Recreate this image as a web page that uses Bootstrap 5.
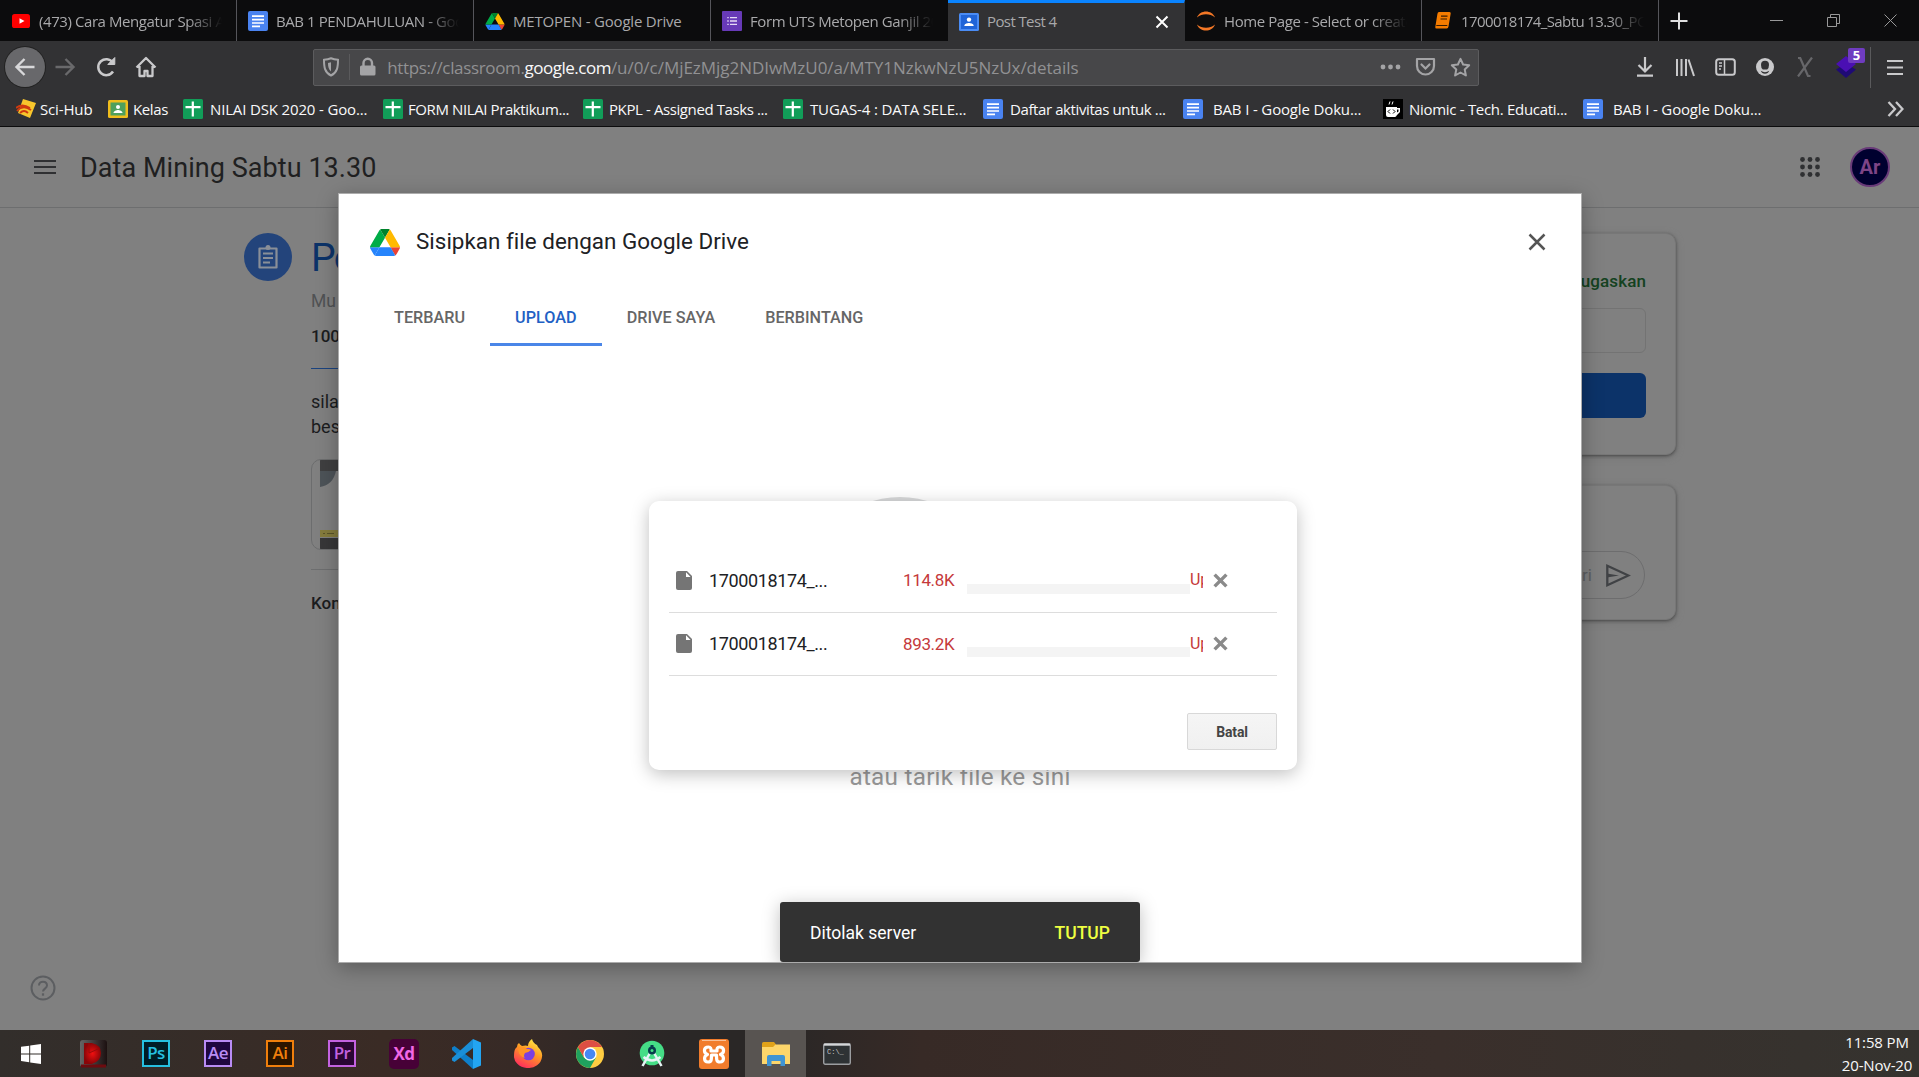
<!DOCTYPE html>
<html lang="id">
<head>
<meta charset="utf-8">
<title>Post Test 4</title>
<link href="https://cdn.jsdelivr.net/npm/bootstrap@5.3.0/dist/css/bootstrap.min.css" rel="stylesheet">
<style>
html,body{height:100%;overflow:hidden}
body{background:#323234;font-family:"Open Sans","Noto Sans",sans-serif;font-size:15px;line-height:20px;color:#f9f9fa;width:1919px;height:1077px}
svg{display:block;flex:none}
.rob{font-family:Roboto,"Liberation Sans",sans-serif}
/* tab strip */
.tabstrip{height:41px;background:#0c0c0d;flex:none}
.tabitem{width:237px;padding:0 12px 0 11px;gap:8px;border-right:1.5px solid #55555a;color:#a9a9ab;flex:none}
.tabitem.before,.tabitem.current{border-right-color:transparent}
.tabitem.current{background:#323234;border-top:3px solid #0a84ff;padding:0 15px 2px 11px}
.tablabel{flex:1;min-width:0;overflow:hidden;white-space:nowrap;letter-spacing:-.42px}
.tabitem svg{margin-top:1px}
.loose{letter-spacing:-.2px}
.tight{letter-spacing:-.6px}
.fade-end{-webkit-mask-image:linear-gradient(90deg,#000 80%,transparent 99%);mask-image:linear-gradient(90deg,#000 80%,transparent 99%)}
.winbtn{width:57px}
/* toolbar */
.toolbar{height:52px;flex:none;padding-left:5px}
.navbtn{width:40px;height:40px;border-radius:50%;display:grid;place-items:center;color:#c9c9cb}
.navbtn + .navbtn{margin-left:.4px}
.navbtn.filled{background:#68686b;box-shadow:0 0 0 1px #222}
.urlbar{width:1166px;height:37px;background:#474749;border:1px solid #5c5c5e;border-radius:2px;margin-left:147px;color:#a4a4a6}
.urltext{font-size:17px;letter-spacing:-.18px;color:#919193;white-space:nowrap;padding-top:1px;margin-left:10px}
.urltext b{font-weight:400;color:#f9f9fa;letter-spacing:-.5px}
.toolicon{width:40px;display:grid;place-items:center;color:#c9c9cb}
.count{position:absolute;left:23px;top:2px;width:17px;height:15px;background:#6f3cc0;border-radius:2px;font-size:13px;font-weight:700;line-height:14px;text-align:center;color:#fff}
.vsep{width:1px;background:#5a5a5c}
/* bookmarks */
.bookmarks{height:34px;border-bottom:1px solid #0c0c0d;flex:none;padding:0 0 2px 16px}
.bm{width:200px;gap:7px;flex:none;white-space:nowrap;letter-spacing:-.4px}
.bm.loose{letter-spacing:-.15px}
.bm.wide{gap:10px}
/* page */
.page{height:903px;background:#808080;color:#1b1c1e;overflow:hidden;flex:none}
.topbar{height:81px;border-bottom:1px solid #6d6e6f;padding:0 29px 0 34px}
.coursename{font-size:27px;letter-spacing:.06px;color:#1f2021;line-height:34px;padding-top:2px}
.avatar{width:40px;height:40px;border-radius:50%;background:#00002f;border:2px solid #683a78;color:#7d4486;font-weight:700;font-size:20px;line-height:36px;text-align:center}
.assign{padding:25px 0 0 244px;width:600px}
.assigncol{margin-left:19px;width:300px}
.disc{width:48px;height:48px;border-radius:50%;background:#23447b;display:grid;place-items:center;flex:none}
.bigtitle{font-size:39px;line-height:48px;color:#0c3369;letter-spacing:-1.5px;padding-top:1px}
.meta{font-size:17.5px;line-height:20px;margin-top:9px;color:#505254}
.points{font-size:17px;line-height:20px;font-weight:500;margin-top:15px}
.rule-accent{border-top:1px solid #1b437f;margin-top:22px}
.body-copy{font-size:18px;line-height:25px;margin-top:20px}
.thumb{width:200px;height:91px;border:1px solid #6c6d6e;border-radius:10px;padding-left:8px;overflow:hidden;margin-top:20px}
.rule-plain{border-top:1px solid #6d6e6f;margin-top:19px}
.comments{font-size:17px;line-height:20px;font-weight:500;margin-top:23px}
.sidecol{width:366px;margin-right:243px;padding-top:25px}
.sidecard{border-radius:10px;background:#808080;border:1px solid #777;box-shadow:0 1px 3px #4a4a4a,0 2px 7px #6e6e6e}
.fakebtn{height:45px;border-radius:6px}
.status{font-size:17px;font-weight:500;color:#144220;letter-spacing:.1px}
.pill{height:48px;border:1px solid #6d6d6e;border-radius:24px;padding-right:13px;color:#5d5f62}
.help{position:absolute;left:30px;bottom:29px}
/* picker */
.picker{position:absolute;left:338px;top:66px;width:1244px;height:770px;background:#fff;border:1px solid #acacac;box-shadow:0 5px 20px rgba(0,0,0,.3)}
.pickhead{padding:33px 35px 0 31px}
.picktitle{font-size:22.4px;line-height:28px;padding-bottom:2px;color:#202124;margin-left:16px;letter-spacing:.03px}
.picktabs{margin-left:30px;margin-top:48px}
.ptab{padding:1px 25px 14px;font-size:16.2px;font-weight:500;color:#666;height:41px;letter-spacing:.02px;border-bottom:3px solid transparent;line-height:24px;white-space:nowrap}
.ptab.current{color:#2160c4;border-bottom-color:#4a86e8}
.dropzone{position:absolute;left:0;right:0;top:303px}
.dropdisc{width:186px;height:186px;border-radius:50%;background:#d9dadb;margin-right:120px}
.droptext{font-size:24.3px;line-height:28px;color:#999;margin-top:80px;letter-spacing:.25px}
.uploads{position:absolute;left:310px;top:307px;width:648px;height:269px;background:#fff;border-radius:10px;box-shadow:0 4px 18px rgba(0,0,0,.25);padding:48px 20px 20px}
.uprow{border-bottom:1px solid #ddd;height:63.5px;padding:0 49px 0 7px;font-size:18px;color:#202124}
.upname{width:194px;margin-left:17px;letter-spacing:-.37px;padding-top:1px}
.upsize{width:64px;color:#c5393b;font-size:17px;letter-spacing:-.35px}
.uptrack{width:223px;height:10px;background:#f4f4f4;margin-top:17px}
.upstat{width:13px;overflow:hidden;color:#c5393b;font-size:16px;white-space:nowrap;letter-spacing:-.2px;height:20px}
.cancelbtn{width:90px;height:37px;border:1px solid #d8d8d8;border-radius:2px;background:linear-gradient(#f5f5f5,#f0f0f0);font-size:14px;font-weight:700;color:#444;padding:0;margin-top:37px;letter-spacing:-.15px}
.snack{position:absolute;left:441px;bottom:0;width:360px;height:60px;background:#323232;border-radius:3px;box-shadow:0 3px 18px rgba(0,0,0,.25);padding:1px 30px 0;font-size:17.5px;color:#fff}
.snack .act{color:#eeff41;font-weight:500}
/* taskbar */
.taskbar{height:47px;background:linear-gradient(90deg,#322e2b 0,#3a2b25 20%,#372a26 27%,#2a2726 35%,#2a2726 41%,#372a26 48%,#3a2f2b 75%,#37312d 88%,#35332f);flex:none}
.task{width:62px;display:grid;place-items:center;flex:none}
.task.current{background:#585451}
.adobe{width:28px;height:27px;border:2px solid;font-size:17px;line-height:22px;text-align:center;font-weight:600;letter-spacing:-.6px}
.ps{color:#26c0e0;background:#001d26}.ae{color:#b98cf5;background:#1f0740}.ai{color:#f07f0c;background:#2a1500}.pr{color:#c362e0;background:#2a0634}
.xd{width:30px;height:30px;border:0;border-radius:5px;background:#470137;color:#f267e6;font-weight:700;line-height:30px}
.clock{font-size:15px;line-height:23px;width:76px;margin-right:4px;text-align:center;white-space:nowrap;letter-spacing:-.15px;padding-top:1px}
</style>
<script src="https://cdn.jsdelivr.net/npm/bootstrap@5.3.0/dist/js/bootstrap.bundle.min.js"></script>
</head>
<body class="d-flex flex-column m-0">
<svg width="0" height="0" class="position-absolute">
<symbol id="docs" viewBox="0 0 20 20"><rect width="20" height="20" rx="2" fill="#4a83f0"/><path d="M4 5.2h12M4 8.6h12M4 12h12M4 15.4h8" stroke="#fff" stroke-width="1.7"/></symbol>
<symbol id="sheets" viewBox="0 0 20 20"><rect width="20" height="20" rx="1.5" fill="#119d58"/><path d="M2.5 8.2h15M9.8 2.6v15" stroke="#fff" stroke-width="2.2"/></symbol>
<symbol id="drive" viewBox="0 0 87.3 78"><path d="m6.6 66.85 3.85 6.65c.8 1.4 1.95 2.5 3.3 3.3l13.75-23.8h-27.5c0 1.55.4 3.1 1.2 4.5z" fill="#2684fc"/><path d="m43.65 25-13.75-23.8c-1.35.8-2.5 1.9-3.3 3.3l-25.4 44a9 9 0 0 0-1.2 4.5h27.5z" fill="#00ac47"/><path d="m73.55 76.8c1.35-.8 2.5-1.9 3.3-3.3l1.6-2.75 7.65-13.25c.8-1.4 1.2-2.95 1.2-4.5h-27.5l5.85 11.5z" fill="#ea4335"/><path d="m43.65 25 13.75-23.8c-1.35-.8-2.9-1.2-4.5-1.2h-18.5c-1.6 0-3.15.45-4.5 1.2z" fill="#00832d"/><path d="m59.8 53h-32.3l-13.75 23.8c1.35.8 2.9 1.2 4.5 1.2h50.8c1.6 0 3.15-.45 4.5-1.2z" fill="#2684fc"/><path d="m73.4 26.5-12.7-22c-.8-1.4-1.95-2.5-3.3-3.3l-13.75 23.8 16.15 28h27.45c0-1.55-.4-3.1-1.2-4.5z" fill="#ffba00"/></symbol>
<symbol id="file" viewBox="0 0 16 19"><path d="M2 0h9l5 5v12a2 2 0 0 1-2 2H2a2 2 0 0 1-2-2V2a2 2 0 0 1 2-2z" fill="#757575"/><path d="M10 1.2V6h4.6z" fill="#fff"/></symbol>
<symbol id="cross" viewBox="0 0 14 14"><path d="m1.5 1.500 11 11M12.500 1.500l-11 11" stroke="#8a8a8a" stroke-width="3.200"/></symbol>
</svg>

<div class="tabstrip d-flex">
  <div class="tabitem d-flex align-items-center"><svg width="20" height="20" viewBox="0 0 20 20"><rect y="3" x="1" width="18" height="14" rx="2.6" fill="#f00"/><path d="m8.500 7.200 5 2.800-5 2.800z" fill="#fff"/></svg><span class="tablabel fade-end">(473) Cara Mengatur Spasi Antar</span></div>
  <div class="tabitem d-flex align-items-center"><svg width="20" height="20"><use href="#docs"/></svg><span class="tablabel fade-end">BAB 1 PENDAHULUAN - Google</span></div>
  <div class="tabitem d-flex align-items-center"><svg width="20" height="17"><use href="#drive"/></svg><span class="tablabel loose">METOPEN - Google Drive</span></div>
  <div class="tabitem before d-flex align-items-center"><svg width="20" height="20" viewBox="0 0 20 20"><rect width="20" height="20" rx="1" fill="#673ab7"/><path d="M8 6.700h7M8 10h7M8 13.300h7M5.300 6.700h1.400M5.300 10h1.400M5.300 13.300h1.400" stroke="#e6dcf5" stroke-width="1.300"/></svg><span class="tablabel fade-end">Form UTS Metopen Ganjil 2020</span></div>
  <div class="tabitem current d-flex align-items-center"><svg width="20" height="18" viewBox="0 0 20 18"><rect width="20" height="18" rx="1.500" fill="#4a8cf5"/><rect x="2" y="2" width="16" height="14" fill="#1f64d8"/><circle cx="10" cy="6.600" r="2.200" fill="#fff"/><path d="M5.300 13c0-2.200 3-3 4.700-3s4.700.8 4.700 3z" fill="#fff"/></svg><span class="tablabel tight">Post Test 4</span><svg width="14" height="14" viewBox="0 0 14 14"><path d="m1.500 1.500 11 11m0-11-11 11" stroke="#fff" stroke-width="2"/></svg></div>
  <div class="tabitem d-flex align-items-center"><svg width="20" height="20" viewBox="0 0 20 20"><path d="M1 6.500C4-1.500 16-1.500 19 6.500 14 2.200 6 2.200 1 6.500zM1 13.500c3 8 15 8 18 0-5 4.300-13 4.300-18 0z" fill="#f37726"/></svg><span class="tablabel fade-end">Home Page - Select or create</span></div>
  <div class="tabitem d-flex align-items-center"><svg width="20" height="18" viewBox="0 0 20 18"><path d="M6 0h10.500q1.500 0 1.200 1.500l-2.200 13q-.3 2-1.800 2H3.500Q2 16.500 2.300 15L4.400 2Q4.700 0 6 0z" fill="#f57c00"/><path d="M8 4.200h6.500M7.500 7H14M3.300 13.500h11" stroke="#3a1c00" stroke-width="1.200"/></svg><span class="tablabel tight fade-end">1700018174_Sabtu 13.30_POST</span></div>
  <div class="d-flex align-items-center" style="padding-left:11px"><svg width="18" height="18" viewBox="0 0 18 18"><path d="M9 .5v17M.5 9h17" stroke="#e0e0e0" stroke-width="2"/></svg></div>
  <div class="d-flex ms-auto align-items-center">
    <div class="winbtn d-flex justify-content-center"><svg width="13" height="13"><path d="M0 6.500h13" stroke="#999"/></svg></div>
    <div class="winbtn d-flex justify-content-center"><svg width="13" height="13" fill="none" stroke="#999"><path d="M.5 3.500h9v9h-9zM3.500 3.500v-3h9v9h-3"/></svg></div>
    <div class="winbtn d-flex justify-content-center"><svg width="13" height="13"><path d="m.5.5 12 12m0-12-12 12" stroke="#999"/></svg></div>
  </div>
</div>

<div class="toolbar d-flex align-items-center">
  <div class="navbtn filled"><svg width="22" height="20" viewBox="0 0 22 20" fill="none" stroke="#d8d8da" stroke-width="2.400"><path d="M20.500 10H2.500M10.500 2l-8 8 8 8"/></svg></div>
  <div class="navbtn"><svg width="22" height="20" viewBox="0 0 22 20" fill="none" stroke="#69696b" stroke-width="2.400"><path d="M1.500 10h18M11.500 2l8 8-8 8"/></svg></div>
  <div class="navbtn"><svg width="22" height="22" viewBox="0 0 22 22" fill="none" stroke="currentColor" stroke-width="2.500"><path d="M17.800 6.500A8 8 0 1 0 18 15.500"/><path d="M19.800 1.500V8.500H12.800z" fill="currentColor" stroke-width="1"/></svg></div>
  <div class="navbtn"><svg width="22" height="22" viewBox="0 0 22 22" fill="none" stroke="currentColor" stroke-width="2.300" stroke-linejoin="round"><path d="M1.500 11.500 11 2l9.500 9.500M4.500 10v10h5v-5h3v5h5V10"/></svg></div>
  <div class="urlbar d-flex align-items-center px-2">
    <svg width="18" height="20" viewBox="0 0 18 20" fill="none" stroke="currentColor" stroke-width="2"><path d="M9 1.300c2.500 1 4.700 1.300 7 1.500 0 7-.5 12.500-7 15.700C2.500 15.300 2 9.800 2 2.800c2.300-.2 4.500-.5 7-1.500z"/><path d="M9 5.200v9.200C6.500 12.500 6 9.500 6 6z" fill="currentColor" stroke="none"/></svg>
    <div class="vsep" style="height:26px;margin:0 9px"></div>
    <svg width="18" height="20" viewBox="0 0 18 20"><rect x="1" y="8.500" width="15.500" height="10" rx="1.500" fill="currentColor"/><path d="M4.500 9V6a4.200 4.200 0 0 1 8.500 0v3" fill="none" stroke="currentColor" stroke-width="2.400"/></svg>
    <div class="urltext"><span style="letter-spacing:-.35px">https://classroom.</span><b>google.com</b><span style="letter-spacing:-.03px">/u/0/c/MjEzMjg2NDIwMzU0/a/MTY1NzkwNzU5NzUx/details</span></div>
    <svg class="ms-auto" width="21" height="6" fill="currentColor"><circle cx="3" cy="3" r="2.400"/><circle cx="10.500" cy="3" r="2.400"/><circle cx="18" cy="3" r="2.400"/></svg>
    <svg style="margin-left:14px" width="21" height="20" viewBox="0 0 21 20" fill="none" stroke="currentColor" stroke-width="2.200" stroke-linecap="round"><path d="M2 2h17v7a8.500 8.500 0 0 1-17 0z" stroke-linejoin="round"/><path d="m6.500 7.500 4 4 4-4"/></svg>
    <svg style="margin:0 -1px 0 14px" width="21" height="21" viewBox="0 0 21 21" fill="none" stroke="currentColor" stroke-width="2" stroke-linejoin="round"><path d="m10.500 1.800 2.600 5.700 6.100.7-4.500 4.200 1.200 6.100-5.400-3-5.400 3 1.200-6.100L1.800 8.200l6.100-.7z"/></svg>
  </div>
  <div class="d-flex align-items-center ms-auto align-self-stretch">
    <div class="toolicon"><svg width="18" height="20" viewBox="0 0 18 20" fill="none" stroke="currentColor" stroke-width="2.200"><path d="M9 0v14M2.500 8 9 14.500 15.500 8M1 18.700h16"/></svg></div>
    <div class="toolicon"><svg width="20" height="19" viewBox="0 0 20 19" fill="none" stroke="currentColor" stroke-width="2"><path d="M2 1v17M6.500 1v17M11 1v17M13.500 1.500 19 18"/></svg></div>
    <div class="toolicon"><svg width="21" height="18" viewBox="0 0 21 18" fill="none" stroke="currentColor" stroke-width="2"><rect x="1.200" y="1.200" width="18.600" height="15.600" rx="2.500"/><path d="M9.500 1v16M4 5h3M4 8h3M4 11h2" stroke-width="1.500"/></svg></div>
    <div class="toolicon"><svg width="18" height="18" viewBox="0 0 18 18"><circle cx="9" cy="9" r="9" fill="currentColor"/><path d="M5 7a4 4.200 0 0 1 8 0q0 3-1.800 4.500H6.800Q5 10 5 7z" fill="#323234"/><path d="M4.800 12.800q4.200 2.800 8.400 0-1 3-4.200 3t-4.200-3z" fill="#323234"/></svg></div>
    <div class="toolicon"><svg width="18" height="20" viewBox="0 0 18 20" fill="none" stroke="#67676a" stroke-width="2.200"><path d="M2 1h2.200L12 19h2.500M16 .5 2 19.500"/></svg></div>
    <div class="toolicon position-relative" style="width:42px;height:42px"><svg width="20" height="22" viewBox="0 0 20 22"><path d="m0 13.500 10-6 10 6L10 22z" fill="#1f0a75"/><path d="m0 8 10-8 10 8-10 8z" fill="#4a0fb3"/></svg><span class="count">5</span></div>
    <div class="vsep" style="height:41px;margin-left:3px"></div>
    <div class="toolicon" style="width:48px"><svg width="16" height="17" fill="none" stroke="currentColor" stroke-width="2.200"><path d="M0 2h16M0 8.500h16M0 15h16"/></svg></div>
  </div>
</div>

<div class="bookmarks d-flex align-items-center">
  <div class="bm loose d-flex align-items-center" style="width:92px;gap:4px"><svg width="20" height="20" viewBox="0 0 20 20"><path d="m7 0 13 4-6 15L2 14z" fill="#f8c62c"/><path d="M0 9q6-5 14 0M1 12q6-7 14-1M4 14q4-4 8 0" stroke="#cf3a10" stroke-width="1.800" fill="none"/></svg>Sci-Hub</div>
  <div class="bm d-flex align-items-center" style="width:75px;gap:5px"><svg width="20" height="18" viewBox="0 0 20 18"><rect width="20" height="18" rx="1.500" fill="#f0bd1c"/><rect x="2.500" y="2.500" width="15" height="13" fill="#4fa05c"/><circle cx="10" cy="7" r="2" fill="#fff"/><path d="M5.500 13c0-2 3-3 4.500-3s4.500 1 4.500 3z" fill="#fff"/></svg>Kelas</div>
  <div class="bm loose d-flex align-items-center"><svg width="20" height="20"><use href="#sheets"/></svg>NILAI DSK 2020 - Goo...</div>
  <div class="bm d-flex align-items-center" style="gap:5px"><svg width="20" height="20"><use href="#sheets"/></svg>FORM NILAI Praktikum...</div>
  <div class="bm d-flex align-items-center" style="gap:6px"><svg width="20" height="20"><use href="#sheets"/></svg>PKPL - Assigned Tasks ...</div>
  <div class="bm loose d-flex align-items-center"><svg width="20" height="20"><use href="#sheets"/></svg>TUGAS-4 : DATA SELE...</div>
  <div class="bm d-flex align-items-center"><svg width="20" height="20"><use href="#docs"/></svg>Daftar aktivitas untuk ...</div>
  <div class="bm wide loose d-flex align-items-center"><svg width="20" height="20"><use href="#docs"/></svg>BAB I - Google Doku...</div>
  <div class="bm d-flex align-items-center" style="gap:6px;letter-spacing:-.3px"><svg width="20" height="20" viewBox="0 0 20 20"><rect width="20" height="20" fill="#000"/><path d="M3 8h11v1h3v4l-3 3q-1 2-2 2H5q-2 0-2-2zM14 10.500v3l1.500-1v-2z" fill="#fff" fill-rule="evenodd"/><path d="m7 10.500-2 2 2 2m3-4 2 2-2 2" stroke="#000" fill="none"/><path d="M7 2.500 6 5.500m4-3L9 5.500" stroke="#fff"/></svg>Niomic - Tech. Educati...</div>
  <div class="bm wide loose d-flex align-items-center"><svg width="20" height="20"><use href="#docs"/></svg>BAB I - Google Doku...</div>
  <svg class="ms-auto" style="margin-right:15px" width="17" height="16" viewBox="0 0 17 16" fill="none" stroke="#c9c9cb" stroke-width="2.300"><path d="m1.500 1 6.500 7-6.500 7M9 1l6.500 7L9 15"/></svg>
</div>

<div class="page rob position-relative">
  <div class="topbar d-flex align-items-center">
    <svg width="22" height="16" stroke="#2f3032" stroke-width="2.200"><path d="M0 2h22M0 8h22M0 14h22"/></svg>
    <div class="coursename ms-4">Data Mining Sabtu 13.30</div>
    <svg class="ms-auto" width="20" height="20" fill="#2f3032"><circle cx="2.500" cy="2.500" r="2.400"/><circle cx="10" cy="2.500" r="2.400"/><circle cx="17.500" cy="2.500" r="2.400"/><circle cx="2.500" cy="10" r="2.400"/><circle cx="10" cy="10" r="2.400"/><circle cx="17.500" cy="10" r="2.400"/><circle cx="2.500" cy="17.500" r="2.400"/><circle cx="10" cy="17.500" r="2.400"/><circle cx="17.500" cy="17.500" r="2.400"/></svg>
    <div class="avatar" style="margin-left:30px">Ar</div>
  </div>
  <div class="d-flex justify-content-between">
    <div class="assign d-flex">
      <div class="disc"><svg width="24" height="27" viewBox="0 0 24 27"><path d="M3.500 4.500h17v19h-17z" fill="none" stroke="#8a8f98" stroke-width="2.200" stroke-linejoin="round"/><circle cx="12" cy="3.500" r="2.500" fill="#8a8f98"/><path d="M7 9.500h10M7 14h10M7 18.500h7" stroke="#8a8f98" stroke-width="2"/></svg></div>
      <div class="assigncol">
        <div class="bigtitle">Post Test 4</div>
        <div class="meta">Mu</div>
        <div class="points">100</div>
        <div class="rule-accent"></div>
        <div class="body-copy">sila<br>bes</div>
        <div class="thumb"><svg width="40" height="90"><path fill="#3f3f40" d="M0 0h40v11H0z"/><path fill="#4d5358" d="M0 11h16q-3 14-16 16z"/><path fill="#857c3d" d="M0 70h40v7H0z"/><path d="M3 73.500h2M7 73.500h7" stroke="#5a5428"/><path fill="#373738" d="M0 78h40v12H0z"/></svg></div>
        <div class="rule-plain"></div>
        <div class="comments">Komentar</div>
      </div>
    </div>
    <div class="sidecol">
      <div class="sidecard" style="height:222px;padding:37px 29px 0">
        <div class="text-end status">Ditugaskan</div>
        <div class="fakebtn" style="border:1px solid #737373;margin-top:17px"></div>
        <div class="fakebtn" style="background:#0c3369;margin-top:20px"></div>
      </div>
      <div class="sidecard" style="height:135px;margin-top:30px;padding:65px 30px 0">
        <div class="pill d-flex align-items-center justify-content-end"><span style="font-size:17px;margin-right:14px">ri</span><svg width="25" height="23" viewBox="0 0 25 23"><path d="M1.300 1.800 22.500 11.500 1.300 21.200z" fill="none" stroke="#404245" stroke-width="2.300"/><path d="M1 9.500 13 11.500 1 13.500z" fill="#404245"/></svg></div>
      </div>
    </div>
  </div>
  <svg class="help" width="26" height="26" viewBox="0 0 26 26" fill="none" stroke="#5c5e61" stroke-width="2"><circle cx="13" cy="13" r="11.500"/><path d="M9 10.500c0-5.300 8-5 8 0 0 3-4 3.200-4 6"/><path d="M13 18.300v2.400" stroke-width="2.200"/></svg>

  <div class="picker overflow-hidden">
    <div class="pickhead d-flex align-items-center">
      <svg width="30" height="27"><use href="#drive"/></svg>
      <div class="picktitle">Sisipkan file dengan Google Drive</div>
      <svg class="ms-auto" width="18" height="18"><path d="m1.500 1.500 15 15m0-15-15 15" stroke="#555" stroke-width="2.500"/></svg>
    </div>
    <div class="picktabs d-flex">
      <div class="ptab">TERBARU</div><div class="ptab current">UPLOAD</div><div class="ptab">DRIVE SAYA</div><div class="ptab">BERBINTANG</div>
    </div>
    <div class="dropzone d-flex flex-column align-items-center">
      <div class="dropdisc"></div>
      <div class="droptext">atau tarik file ke sini</div>
    </div>
    <div class="uploads">
      <div class="uprow d-flex align-items-center">
        <svg width="16" height="19"><use href="#file"/></svg><span class="upname">1700018174_...</span><span class="upsize">114.8K</span><span class="uptrack"></span><span class="upstat">Upload</span><svg class="ms-auto" width="15" height="15"><use href="#cross"/></svg>
      </div>
      <div class="uprow d-flex align-items-center">
        <svg width="16" height="19"><use href="#file"/></svg><span class="upname">1700018174_...</span><span class="upsize">893.2K</span><span class="uptrack"></span><span class="upstat">Upload</span><svg class="ms-auto" width="15" height="15"><use href="#cross"/></svg>
      </div>
      <div class="d-flex justify-content-end"><button class="cancelbtn">Batal</button></div>
    </div>
    <div class="snack d-flex align-items-center justify-content-between"><span>Ditolak server</span><span class="act">TUTUP</span></div>
  </div>
</div>

<div class="taskbar d-flex">
  <div class="task"><svg width="20" height="20" viewBox="0 0 20 20" fill="#fff"><path d="M0 2.800 8.200 1.700v7.700H0zM9.200 1.500 20 0v9.400H9.200zM0 10.400h8.200v7.800L0 17.100zM9.200 10.400H20V20L9.200 18.400z"/></svg></div>
  <div class="task" style="width:63px"><svg width="27" height="28" viewBox="0 0 27 28"><defs><linearGradient id="dg" x2="1"><stop stop-color="#666"/><stop offset="1" stop-color="#1c1010"/></linearGradient><radialGradient id="dr"><stop stop-color="#f01010"/><stop offset="1" stop-color="#8a0508"/></radialGradient></defs><rect width="27" height="27" rx="3" fill="url(#dg)"/><path d="M4 3h8q9 2 9 10t-9 11H4z" fill="url(#dr)"/><path d="M1 24.500h25v3H1z" fill="#6d0b0f"/><path d="M9 3v10l9-4" stroke="#9a0a0a" fill="none"/></svg></div>
  <div class="task"><div class="adobe ps">Ps</div></div>
  <div class="task"><div class="adobe ae">Ae</div></div>
  <div class="task"><div class="adobe ai">Ai</div></div>
  <div class="task"><div class="adobe pr">Pr</div></div>
  <div class="task"><div class="adobe xd">Xd</div></div>
  <div class="task"><svg width="30" height="30" viewBox="0 0 30 30"><path d="M22 0 30 3.500v23L22 30z" fill="#23a5f1"/><path d="M1 8.500 3.500 7 22 21v9L1 11z" fill="#0e7fca"/><path d="M1 21.500 3.500 23 22 9V0L1 19z" fill="#1a8fd8"/></svg></div>
  <div class="task"><svg width="29" height="29" viewBox="0 0 29 29"><defs><linearGradient id="ff" x1=".8" y1="0" x2=".3" y2="1"><stop stop-color="#fff04a"/><stop offset=".45" stop-color="#ff9a22"/><stop offset="1" stop-color="#ff2b5e"/></linearGradient></defs><path d="M18 0q1 4 5 6l1 2q5 5 4 10a14 12 0 0 1-28-2Q0 10 3 8q0-3 2-4 1 2 3 3 4-1 6 0 0-4 4-7z" fill="url(#ff)"/><circle cx="14.500" cy="15" r="6.300" fill="#7b3fe0"/><path d="M4 10q6-4 9 0 3 0 4 1-3 3-6 3-2 3 0 5-6-1-7-9z" fill="#ff9327"/></svg></div>
  <div class="task"><svg width="28" height="28" viewBox="0 0 28 28"><circle cx="14" cy="14" r="14" fill="#ffcd42"/><path d="M1.900 7A14 14 0 0 0 14 28l6-10.500L8 17.500z" fill="#1fa15e"/><path d="M1.900 7A14 14 0 0 1 26.100 7H14L8 17.500z" fill="#dd4f43"/><circle cx="14" cy="14" r="6.700" fill="#fff"/><circle cx="14" cy="14" r="5.300" fill="#4688f4"/></svg></div>
  <div class="task"><svg width="26" height="28" viewBox="0 0 26 28"><circle cx="13" cy="13" r="12.300" fill="#45dd86"/><path d="m11 13-7.500 13M15 13l7.500 13M4.500 17q8.500 7 17 0" stroke="#e6f4f5" stroke-width="2.500" fill="none"/><circle cx="13" cy="10.500" r="4" fill="#073b4c"/><path d="M13 5v4" stroke="#073b4c" stroke-width="3"/><circle cx="13" cy="10.500" r="1.500" fill="#45dd86"/></svg></div>
  <div class="task"><svg width="30" height="30" viewBox="0 0 30 30"><rect width="30" height="30" rx="3" fill="#f17c2c"/><path d="M3 1.500h24" stroke="#f9c097"/><path d="M15 12h-3q.5-4-2.500-4C4 8 4.500 14 8.500 15.500 4.500 17 4.500 23 9 23c3.500 0 3.500-2 3.500-7h5c0 5 0 7 3.500 7 4.500 0 4.500-6 .5-7.500C25.500 14 26 8 20.500 8q-3 0-2.500 4z" fill="none" stroke="#fff" stroke-width="3.200" stroke-linejoin="round"/></svg></div>
  <div class="task current" style="width:61px"><svg width="28" height="24" viewBox="0 0 28 24"><path d="M0 1.500Q0 0 1.500 0H12l2 2.500-2 3H0z" fill="#e0a21a"/><path d="M0 5h11l2.500-2.500H28V22H0z" fill="#fdd66b"/><path d="M5 24v-9q0-2 2-2h14q2 0 2 2v9h-4.500v-5h-9v5z" fill="#3f94d3"/></svg></div>
  <div class="task"><svg width="28" height="22" viewBox="0 0 28 22"><rect x=".7" y=".7" width="26.600" height="20.600" rx="1.500" fill="#2e3234" stroke="#9b9da0" stroke-width="1.400"/><path d="M1 1.700h26" stroke="#d5d6d8" stroke-width="2"/><text x="4" y="10.500" font-size="7" fill="#c9c9c9" font-family="Liberation Mono, monospace">C:\_</text></svg></div>
  <div class="clock ms-auto d-flex flex-column justify-content-center"><span>11:58 PM</span><span>20-Nov-20</span></div>
</div>
</body>
</html>
